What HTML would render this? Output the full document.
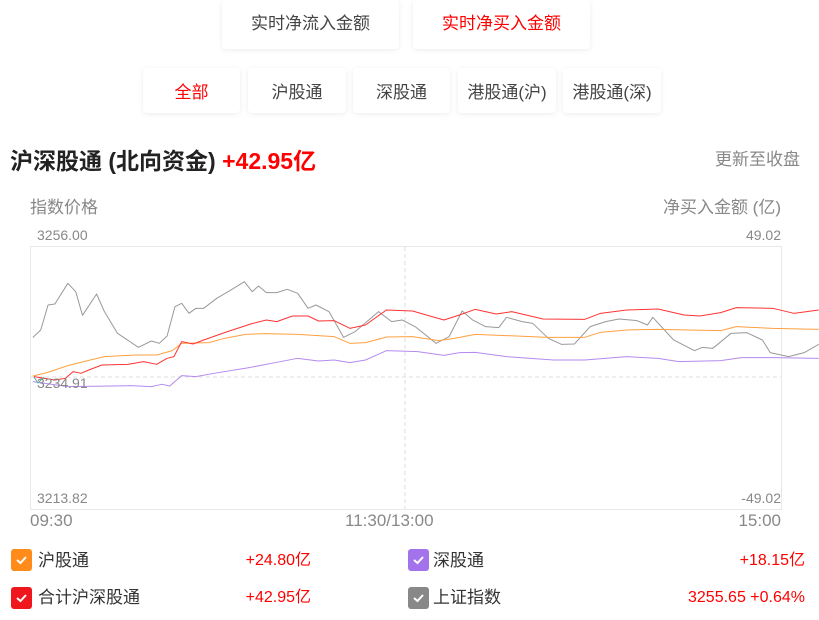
<!DOCTYPE html>
<html><head><meta charset="utf-8"><style>
*{margin:0;padding:0;box-sizing:border-box}
body{width:819px;height:620px;background:#fff;position:relative;overflow:hidden;font-family:"Liberation Sans","Noto Sans CJK SC",sans-serif;color:#333}
.a{position:absolute;white-space:nowrap}
.btn{position:absolute;background:#fff;border-radius:4px;box-shadow:0 1px 6px rgba(0,0,0,0.08);display:flex;align-items:center;justify-content:center;font-size:17px;color:#444}
.red{color:#f00}
.g{color:#888}
.cb{position:absolute;width:21px;height:22px;border-radius:3px}
.cb svg{position:absolute;left:4px;top:5px}
</style></head><body>
<div class="btn" style="left:222px;top:0;width:177px;height:49px;padding-bottom:6px">实时净流入金额</div>
<div class="btn red" style="left:413px;top:0;width:177px;height:49px;padding-bottom:6px">实时净买入金额</div>
<div class="btn red" style="left:143px;top:68px;width:97px;height:45px">全部</div>
<div class="btn" style="left:248px;top:68px;width:98px;height:45px">沪股通</div>
<div class="btn" style="left:353px;top:68px;width:97px;height:45px">深股通</div>
<div class="btn" style="left:458px;top:68px;width:98px;height:45px">港股通(沪)</div>
<div class="btn" style="left:563px;top:68px;width:98px;height:45px">港股通(深)</div>
<div class="a" style="left:10px;top:142px;font-size:23px;font-weight:bold;color:#222">沪深股通 (北向资金) <span class="red">+42.95亿</span></div>
<div class="a g" style="right:19px;top:145px;font-size:17px">更新至收盘</div>
<div class="a g" style="left:30px;top:193px;font-size:17px">指数价格</div>
<div class="a g" style="right:38px;top:193px;font-size:17px">净买入金额 (亿)</div>
<div class="a g" style="left:37px;top:227px;font-size:14px">3256.00</div>
<div class="a g" style="right:38px;top:227px;font-size:14px">49.02</div>
<div class="a g" style="left:37px;top:490px;font-size:14px">3213.82</div>
<div class="a g" style="right:38px;top:490px;font-size:14px">-49.02</div>
<svg class="a" style="left:0;top:0" width="819" height="620">
<rect x="30.5" y="246.5" width="751" height="263" fill="none" stroke="#e8e8e8"/>
<line x1="405" y1="247" x2="405" y2="509" stroke="#ddd" stroke-dasharray="4,3"/>
<line x1="31" y1="377" x2="781" y2="377" stroke="#ddd" stroke-dasharray="4,3"/>
<g transform="translate(0,230) scale(0.5222,0.3333)" fill="none" stroke-width="1" stroke-linejoin="round">
<polyline vector-effect="non-scaling-stroke" stroke="#999" points="63,322 78,300 92,225 105,222 130,160 145,185 158,256 185,192 200,245 225,310 265,352 290,333 305,340 320,318 335,230 348,220 362,250 375,235 390,235 415,205 440,182 468,155 483,185 495,168 510,188 530,188 550,178 570,190 590,235 605,225 630,245 658,322 680,305 725,245 750,275 770,270 795,290 835,340 860,320 885,243 905,270 930,290 955,293 970,262 1000,275 1020,280 1050,325 1075,343 1100,342 1130,290 1160,275 1185,267 1220,272 1240,285 1250,262 1290,330 1330,362 1345,352 1365,355 1400,310 1430,308 1460,330 1475,368 1510,380 1540,368 1568,343"/>
<polyline vector-effect="non-scaling-stroke" stroke="#ffa040" points="63,438 90,428 130,407 160,395 200,380 260,375 300,375 330,362 348,340 400,338 430,325 470,313 510,311 570,313 640,320 670,340 700,338 740,321 790,320 840,332 870,325 910,313 1050,322 1120,322 1150,307 1200,300 1260,298 1380,302 1410,290 1480,295 1568,298"/>
<polyline vector-effect="non-scaling-stroke" stroke="#b38af0" points="63,455 130,470 250,467 290,470 310,463 325,468 348,437 375,440 410,430 480,412 520,400 570,385 610,393 640,390 670,398 700,390 740,362 800,365 850,376 880,368 910,367 970,380 1060,390 1120,390 1200,380 1260,385 1300,395 1380,392 1420,383 1480,383 1568,385"/>
<polyline vector-effect="non-scaling-stroke" stroke="#f33" points="65,440 105,450 125,445 140,425 155,430 170,420 195,405 245,403 275,395 300,403 320,385 333,380 348,335 370,342 390,330 430,308 480,282 510,270 530,275 560,258 590,258 610,273 640,272 670,295 700,285 740,240 790,243 850,270 880,255 910,238 950,252 980,245 1040,267 1120,268 1150,250 1200,240 1260,237 1310,255 1340,258 1380,248 1410,233 1480,235 1520,250 1568,240"/>
</g>
<polyline points="34,377 38,383 44,377" fill="none" stroke="#5a9" stroke-width="1"/>
</svg>
<div class="a g" style="left:37px;top:375px;font-size:14px">3234.91</div>
<div class="a g" style="left:30px;top:511px;font-size:17px">09:30</div>
<div class="a g" style="left:345px;top:511px;font-size:17px">11:30/13:00</div>
<div class="a g" style="right:38px;top:511px;font-size:17px">15:00</div>
<div class="cb" style="left:11px;top:549px;background:#ff8c1a"><svg width="13" height="12"><polyline points="2,6 5.5,9 11,3" fill="none" stroke="#fff" stroke-width="2"/></svg></div>
<div class="cb" style="left:408px;top:549px;background:#a373ec"><svg width="13" height="12"><polyline points="2,6 5.5,9 11,3" fill="none" stroke="#fff" stroke-width="2"/></svg></div>
<div class="cb" style="left:11px;top:587px;background:#f0161e"><svg width="13" height="12"><polyline points="2,6 5.5,9 11,3" fill="none" stroke="#fff" stroke-width="2"/></svg></div>
<div class="cb" style="left:408px;top:587px;background:#888"><svg width="13" height="12"><polyline points="2,6 5.5,9 11,3" fill="none" stroke="#fff" stroke-width="2"/></svg></div>
<div class="a" style="left:38px;top:549px;font-size:17px;line-height:24px">沪股通</div>
<div class="a" style="left:433px;top:549px;font-size:17px;line-height:24px">深股通</div>
<div class="a" style="left:38px;top:586px;font-size:17px;line-height:24px">合计沪深股通</div>
<div class="a" style="left:433px;top:586px;font-size:17px;line-height:24px">上证指数</div>
<div class="a red" style="right:508px;top:549px;font-size:16px;line-height:24px">+24.80亿</div>
<div class="a red" style="right:14px;top:549px;font-size:16px;line-height:24px">+18.15亿</div>
<div class="a red" style="right:508px;top:586px;font-size:16px;line-height:24px">+42.95亿</div>
<div class="a red" style="right:14px;top:586px;font-size:16px;line-height:24px">3255.65 +0.64%</div>
</body></html>
